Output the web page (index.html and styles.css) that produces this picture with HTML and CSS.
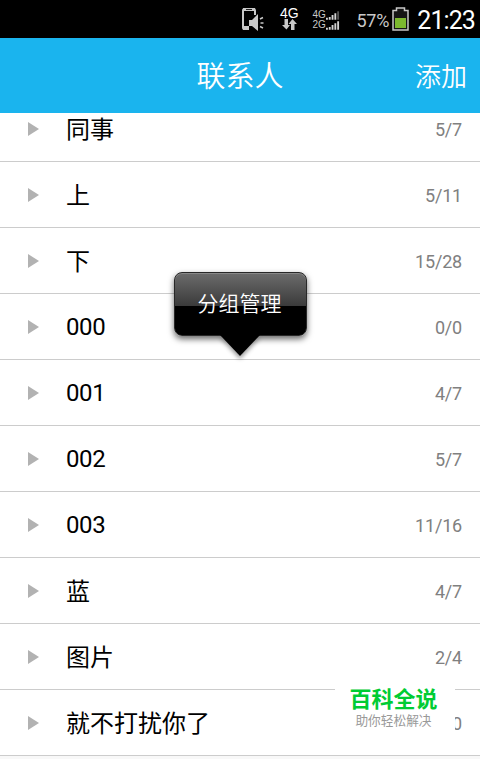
FILE: index.html
```html
<!DOCTYPE html>
<html lang="zh-CN">
<head>
    <meta charset="UTF-8">
    <title>联系人</title>
    <link rel="stylesheet" href="styles.css">
</head>
<body>
    <div class="status-bar">
        <svg class="icon-phone" width="24" height="26" viewBox="0 0 24 26">
            <path d="M8 22H3.500Q2 22 2 20.500V3.500Q2 2 3.500 2H12.500Q14 2 14 3.500V8" fill="none" stroke="#c8c8c8" stroke-width="2"/>
            <path d="M2 1H14V4H2ZM2 19H8V23H2Z" fill="#c8c8c8"/>
            <path d="M5 2.500H11" stroke="#222"/>
            <path d="M8 13H11L17 7V24L11 19H8Z" fill="#c8c8c8"/>
            <path d="M19 12L22 10.500M19.500 16H22.500M19 19.500L22 21" stroke="#c8c8c8" stroke-width="1.500"/>
        </svg>
        <div class="network">
            <span>4G</span>
            <svg width="15" height="11" viewBox="0 0 15 11">
                <path d="M2.500 0H6V6H8L4.500 10.500L0 6H2.500ZM9 11V5H6.500L10.500 0L15 5H12.500V11Z" fill="#c8c8c8"/>
            </svg>
        </div>
        <div class="signals">
            <div class="signal">
                <span>4G</span>
                <svg width="15" height="9" viewBox="0 0 15 9">
                    <path d="M0 7H2V9H0ZM3 6H5V9H3ZM6 4H8V9H6ZM9 2H11V9H9Z" fill="#d2d2d2"/>
                    <path d="M12 0H14V9H12Z" fill="#555"/>
                </svg>
            </div>
            <div class="signal">
                <span>2G</span>
                <svg width="15" height="9" viewBox="0 0 15 9">
                    <path d="M0 7H2V9H0ZM3 6H5V9H3ZM6 4H8V9H6ZM9 2H11V9H9ZM12 0H14V9H12Z" fill="#d2d2d2"/>
                </svg>
            </div>
        </div>
        <span class="percent">57%</span>
        <svg class="battery" width="17" height="24" viewBox="0 0 17 24">
            <path d="M1 3.500H4.500V1H12.500V3.500H16V23H1Z" fill="#151515" stroke="#c8c8c8" stroke-width="1.500"/>
            <rect x="3" y="11" width="11" height="10" fill="#7cb82f"/>
        </svg>
        <span class="clock">21:23</span>
    </div>

    <header class="header">
        <h1>联系人</h1>
        <a class="add">添加</a>
    </header>

    <div class="list-view">
        <ul class="groups">
            <li><i class="arrow"></i><span class="name">同事</span><span class="count">5/7</span></li>
            <li><i class="arrow"></i><span class="name">上</span><span class="count">5/11</span></li>
            <li><i class="arrow"></i><span class="name">下</span><span class="count">15/28</span></li>
            <li><i class="arrow"></i><span class="name number">000</span><span class="count">0/0</span></li>
            <li><i class="arrow"></i><span class="name number">001</span><span class="count">4/7</span></li>
            <li><i class="arrow"></i><span class="name number">002</span><span class="count">5/7</span></li>
            <li><i class="arrow"></i><span class="name number">003</span><span class="count">11/16</span></li>
            <li><i class="arrow"></i><span class="name">蓝</span><span class="count">4/7</span></li>
            <li><i class="arrow"></i><span class="name">图片</span><span class="count">2/4</span></li>
            <li><i class="arrow"></i><span class="name">就不打扰你了</span><span class="count">0/0</span></li>
        </ul>
    </div>

    <!-- Long press menu -->
    <div class="popup">分组管理</div>

    <div class="watermark">
        <strong>百科全说</strong>
        <span>助你轻松解决</span>
    </div>
</body>
</html>
```

FILE: styles.css
```css
body {
    font-family: Roboto, 'Noto Sans CJK SC', sans-serif;
    display: flex;
    flex-direction: column;
    height: 759px;
    margin: 0;
    position: relative;
    overflow: hidden;
    background-color: #f8f8f8;
}

.status-bar {
    display: flex;
    align-items: center;
    justify-content: flex-end;
    flex: none;
    height: 38px;
    padding-right: 5px;
    box-sizing: border-box;
    background-color: #000;
    color: #c8c8c8;
}

.icon-phone {
    margin: 2px 15px 0 0;
}

.network {
    display: flex;
    flex-direction: column;
    align-items: center;
    width: 18px;
    margin: 0 14px 1px 0;
    font: 14px/12px 'Liberation Sans', sans-serif;
    color: #fff;
}

.signals {
    width: 28px;
    margin: 2px 16px 0 0;
}

.signal {
    display: flex;
    align-items: center;
    height: 10px;
    font: 10px/10px 'Liberation Sans', sans-serif;
}

.signal span {
    width: 14px;
    flex: none;
}

.percent {
    font-size: 18px;
    letter-spacing: -0.2px;
    margin: 2px 3px 0 0;
}

.battery {
    margin-right: 8px;
}

.clock {
    margin-top: 2px;
    font-size: 25px;
    letter-spacing: -0.9px;
    color: #fff;
}

.header {
    display: grid;
    grid-template-columns: 1fr auto 1fr;
    align-items: center;
    flex: none;
    height: 75px;
    padding: 0 13px 3px;
    box-sizing: border-box;
    background-color: #1ab4ee;
    color: #fff;
}

.header h1 {
    grid-column: 2;
    margin: 0;
    font-size: 29px;
    font-weight: 350;
}

.add {
    justify-self: end;
    font-size: 26px;
    font-weight: 350;
}

.list-view {
    flex: 1;
    overflow: hidden;
}

.groups {
    list-style: none;
    margin: -17px 0 0; /* list is scrolled a little */
    padding: 0;
}

.groups li {
    display: flex;
    align-items: center;
    height: 66px;
    padding: 0 18px 0 28px;
    box-sizing: border-box;
    border-bottom: 1px solid #ccc;
    background-color: #fff;
}

.arrow {
    border-left: 11px solid #b2b2b2;
    border-top: 7.5px solid transparent;
    border-bottom: 7.5px solid transparent;
}

.name {
    flex: 1;
    margin-left: 27px;
    padding-bottom: 2px;
    font-size: 24px;
    color: #000;
}

.number {
    padding-bottom: 0;
    letter-spacing: -0.4px;
}

.count {
    margin-top: 2px;
    font-size: 18px;
    letter-spacing: -0.2px;
    color: #808080;
}

.popup {
    position: absolute;
    left: 174px;
    top: 272px;
    width: 133px;
    height: 64px;
    box-sizing: border-box;
    padding-right: 2px;
    border: 1px solid #282828;
    border-radius: 8px;
    background: linear-gradient(#6c6c6c, #3a3a3a 33px, #000 33px);
    box-shadow: inset 0 1px 0 #888, 0 3px 6px rgba(0, 0, 0, 0.6);
    color: #fff;
    font-size: 21px;
    font-weight: 350;
    line-height: 63px;
    text-align: center;
}

.popup::after {
    content: '';
    position: absolute;
    left: 45px;
    top: 62px;
    border: 20px solid transparent;
    border-top: 21px solid #000;
    border-bottom: 0;
    filter: drop-shadow(0 3px 2px rgba(0, 0, 0, 0.4));
}

.watermark {
    position: absolute;
    left: 335px;
    top: 685px;
    width: 120px;
    height: 60px;
    display: flex;
    flex-direction: column;
    align-items: center;
    background-color: #fff;
}

.watermark strong {
    margin-right: 3px;
    font-size: 22px;
    font-weight: 600;
    line-height: 30px;
    color: #00cc33;
}

.watermark span {
    margin-right: 3px;
    font-size: 12.7px;
    line-height: 12px;
    color: #999;
}
```
